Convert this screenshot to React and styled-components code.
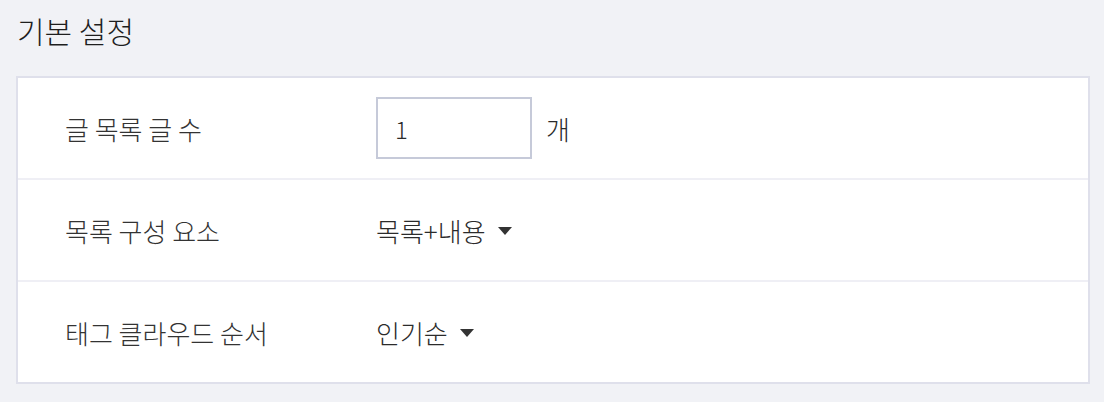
import React from "react";
import styled, { createGlobalStyle } from "styled-components";

const GlobalStyle = createGlobalStyle`
  html, body {
    margin: 0;
    padding: 0;
    background: #f1f2f6;
  }
  body {
    font-family: "Noto Sans CJK KR", "Noto Sans", sans-serif;
    font-weight: 300;
    color: #333;
  }
`;

const Page = styled.div`
  width: 1104px;
  height: 402px;
  padding: 10px 14px 0 16px;
  box-sizing: border-box;
`;

const Title = styled.h2`
  margin: 0 0 26px 1px;
  font-size: 30px;
  font-weight: 300;
  line-height: 40px;
  color: #1e1e1e;
`;

const Card = styled.div`
  background: #fff;
  border: 2px solid #dfe0eb;
`;

const Row = styled.div`
  display: flex;
  align-items: center;
  height: 100px;
  padding-left: 47px;
  & + & {
    border-top: 2px solid #efeff5;
  }
`;

const Label = styled.div`
  width: 311px;
  font-size: 26px;
  color: #333;
`;

const Value = styled.div`
  display: flex;
  align-items: center;
  gap: 14px;
  font-size: 26px;
  color: #2b2b2b;
`;

const NumberInput = styled.input`
  width: 156px;
  height: 62px;
  box-sizing: border-box;
  border: 2px solid #c6cad9;
  padding: 0 17px;
  font-family: inherit;
  font-weight: 300;
  font-size: 24px;
  color: #2b2b2b;
  outline: none;
`;

const Select = styled.div`
  display: flex;
  align-items: center;
  gap: 12px;
  cursor: pointer;
`;

const Caret = styled.span`
  width: 0;
  height: 0;
  margin-top: 2px;
  border-left: 7px solid transparent;
  border-right: 7px solid transparent;
  border-top: 8px solid #333;
`;

export default function App() {
  return (
    <>
      <GlobalStyle />
      <Page>
        <Title>기본 설정</Title>
        <Card>
          <Row>
            <Label>글 목록 글 수</Label>
            <Value>
              <NumberInput defaultValue="1" />
              <span>개</span>
            </Value>
          </Row>
          <Row>
            <Label>목록 구성 요소</Label>
            <Value>
              <Select>
                목록+내용 <Caret />
              </Select>
            </Value>
          </Row>
          <Row>
            <Label>태그 클라우드 순서</Label>
            <Value>
              <Select>
                인기순 <Caret />
              </Select>
            </Value>
          </Row>
        </Card>
      </Page>
    </>
  );
}
